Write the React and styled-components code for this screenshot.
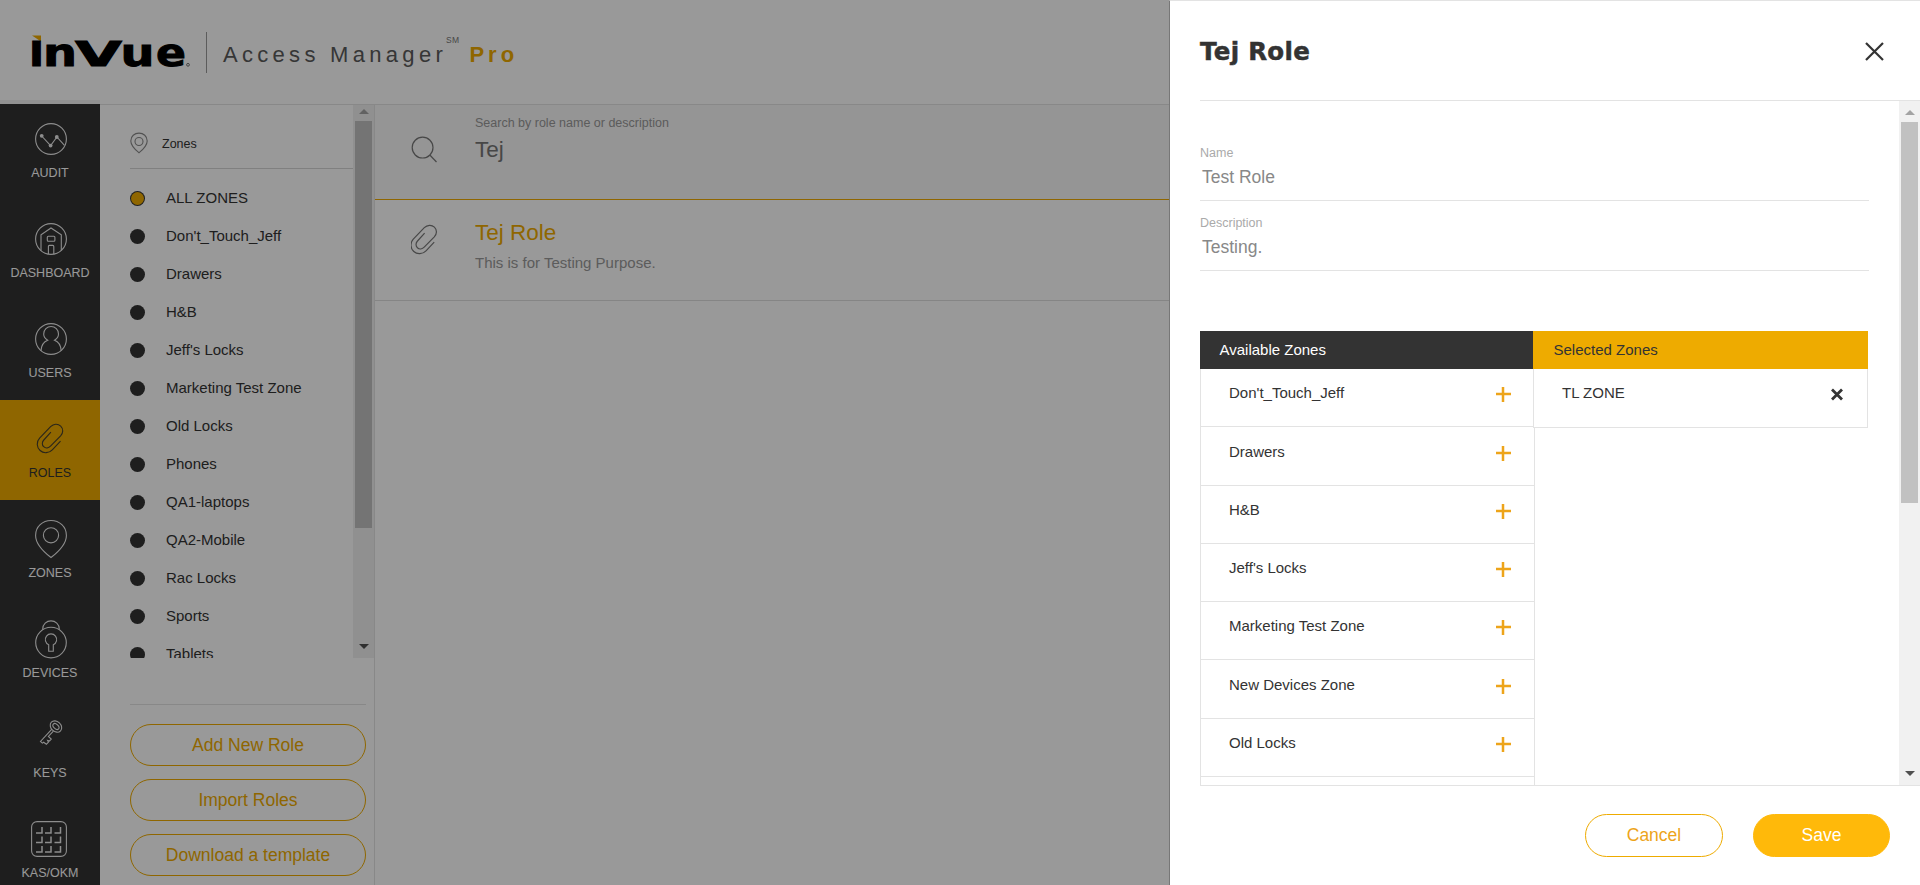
import React from "react";
import styled, { createGlobalStyle } from "styled-components";

const GlobalStyle = createGlobalStyle`
  * { box-sizing: border-box; }
  html, body { margin: 0; padding: 0; overflow: hidden; }
  body { font-family: "Liberation Sans", Arial, sans-serif; color: #333; background: #fff; }
  button, input { font-family: inherit; }
`;

const gold = "#eeab00";
const line = "#e3e3e3";

const Page = styled.div`
  position: relative;
  width: 1920px;
  height: 885px;
  overflow: hidden;
  display: flex;
  flex-direction: column;
  background: #fff;
`;

const Header = styled.header`
  height: 100px;
  flex: none;
  display: flex;
  align-items: flex-start;
  padding: 32px 0 0 28px;
`;

const Wordmark = styled.svg`
  display: block;
  flex: none;
  overflow: visible;
  font-family: "DejaVu Sans", sans-serif;
  font-weight: 700;
`;

const HeaderRule = styled.div`
  width: 1px;
  height: 41px;
  margin-left: 8px;
  background: #999;
`;

const Product = styled.div`
  display: flex;
  align-items: flex-start;
  margin: 0 0 0 16px;
  line-height: 24px;
  font-size: 22px;
  white-space: nowrap;
`;

const ProductName = styled.span`
  margin-top: 11px;
  letter-spacing: 4.3px;
  color: #5a5a5a;
`;

const ServiceMark = styled.sup`
  font-size: 8.5px;
  line-height: 10px;
  margin: 3px 0 0 -1px;
  letter-spacing: 0.3px;
  color: #777;
`;

const Edition = styled.b`
  margin: 11px 0 0 10px;
  letter-spacing: 4px;
  color: ${gold};
`;

const Body = styled.div`
  flex: 1;
  min-height: 0;
  display: flex;
`;

const Nav = styled.nav`
  width: 100px;
  flex: none;
  background: #333;
  border-top: 4px solid #f3f3f3;
  display: flex;
  flex-direction: column;
`;

const NavItem = styled.a`
  height: 100px;
  flex: none;
  display: flex;
  flex-direction: column;
  align-items: center;
  padding-top: 14px;
  background: ${(p) => (p.$active ? gold : "transparent")};
  color: ${(p) => (p.$active ? "#333" : "#fff")};
  font-size: 12.5px;
  line-height: 16px;

  &:first-child {
    height: 96px;
    padding-top: 10px;
  }
`;

const NavIcon = styled.svg`
  width: 50px;
  height: 50px;
  flex: none;
  margin: 0 0 1px 1px;
  fill: none;
  stroke: currentColor;
  stroke-width: 1.1;
  opacity: 0.9;
`;

const Side = styled.aside`
  width: 275px;
  flex: none;
  margin-top: 4px;
  border-top: 1px solid ${line};
  border-right: 1px solid ${line};
  display: flex;
  flex-direction: column;
`;

const ZoneScroller = styled.div`
  height: 553px;
  flex: none;
  display: flex;
  overflow: hidden;
`;

const ZonePane = styled.div`
  flex: 1;
  padding-left: 30px;
`;

const ZoneTitle = styled.div`
  height: 64px;
  display: flex;
  align-items: flex-start;
  border-bottom: 1px solid #d6d6d6;
  font-size: 12.5px;
  line-height: 16px;

  svg { margin: 27px 14px 0 0; }
  span { margin-top: 31px; }
`;

const ZoneList = styled.ul`
  list-style: none;
  margin: 11px 0 0;
  padding: 0;
`;

const Zone = styled.li`
  height: 38px;
  display: flex;
  align-items: flex-start;
  font-size: 15px;
  line-height: 18px;

  span { margin-top: 9px; }
`;

const Dot = styled.i`
  width: 15px;
  height: 15px;
  margin: 11px 21px 0 0;
  border-radius: 50%;
  background: #333;
  display: flex;
  align-items: flex-end;
  justify-content: center;
  padding-bottom: 1px;

  &::after {
    content: "";
    width: 13px;
    height: 13px;
    border-radius: 50%;
    background: ${(p) => (p.$on ? gold : "#333")};
  }
`;

const Track = styled.div`
  width: 21px;
  flex: none;
  display: flex;
  flex-direction: column;
  align-items: center;
  background: #f1f1f1;
`;

const Thumb = styled.div`
  width: 17px;
  height: ${(p) => p.$h}px;
  background: #c1c1c1;
`;

const Arrow = styled.i`
  width: 0;
  height: 0;
  border: 5px solid transparent;
  border-top-width: ${(p) => (p.$up ? 0 : 5)}px;
  border-bottom-width: ${(p) => (p.$up ? 5 : 0)}px;
  border-top-color: #505050;
  border-bottom-color: #a3a3a3;
  margin: ${(p) => p.$m};
`;

const Actions = styled.div`
  margin: 46px 8px 0 30px;
  padding-top: 19px;
  border-top: 1px solid ${line};
  display: flex;
  flex-direction: column;
  gap: 13px;
`;

const Pill = styled.button`
  width: ${(p) => p.$w || "100%"};
  height: ${(p) => p.$h || 42}px;
  padding: 0 0 1px;
  border: 1px solid ${(p) => (p.$solid ? "#ffb90a" : gold)};
  border-radius: 22px;
  background: ${(p) => (p.$solid ? "#ffb90a" : "transparent")};
  color: ${(p) => (p.$solid ? "#fff" : "#eda41a")};
  font-size: 17.5px;
  line-height: 20px;
`;

const SidePill = styled(Pill)`
  color: ${gold};
`;

const Main = styled.main`
  flex: 1;
  margin-top: 4px;
  border-top: 1px solid ${line};
`;

const Row = styled.div`
  display: flex;
  align-items: flex-start;
  padding-left: 36px;
`;

const SearchRow = styled(Row)`
  height: 95px;
  background: #f8f8f8;
  border-bottom: 1px solid ${gold};
`;

const RoleRow = styled(Row)`
  height: 101px;
  border-bottom: 1px solid #dedede;
`;

const RowIcon = styled.svg`
  flex: none;
  width: 28px;
  height: 58px;
  fill: none;
  stroke: #777;
  stroke-width: 1.2;
`;

const RowText = styled.div`
  margin-left: 36px;
  display: flex;
  flex-direction: column;
`;

const SearchLabel = styled.label`
  margin-top: 10px;
  font-size: 12.5px;
  line-height: 16px;
  color: #999;
`;

const SearchValue = styled.span`
  margin-top: 6px;
  font-size: 22.5px;
  line-height: 26px;
  color: #777;
`;

const RoleName = styled.span`
  margin-top: 20px;
  font-size: 22.5px;
  line-height: 26px;
  color: ${gold};
`;

const RoleNote = styled.span`
  margin-top: 8px;
  font-size: 15px;
  line-height: 18px;
  color: #999;
`;

const Overlay = styled.div`
  position: absolute;
  inset: 0;
  background: rgba(0, 0, 0, 0.4);
  display: flex;
  justify-content: flex-end;
`;

const Drawer = styled.section`
  width: 751px;
  height: 885px;
  border-left: 1px solid #777;
  border-top: 1px solid ${line};
  background: #fff;
  display: flex;
  flex-direction: column;
  padding-left: 30px;
`;

const DrawerHead = styled.header`
  height: 100px;
  flex: none;
  display: flex;
  justify-content: space-between;
  align-items: flex-start;
  border-bottom: 1px solid ${line};
  padding: 33px 36px 0 0;

  svg { margin-top: 8px; }
`;

const Title = styled.h1`
  margin: 1px 0 0;
  font-family: "DejaVu Sans", sans-serif;
  font-size: 24.5px;
  line-height: 34px;
  font-weight: 700;
  letter-spacing: 0.3px;
  -webkit-text-stroke: 0.5px #333;
`;

const DrawerBody = styled.div`
  height: 685px;
  flex: none;
  display: flex;
  border-bottom: 1px solid ${line};
`;

const Form = styled.div`
  flex: 1;
  overflow: hidden;
  padding: 30px 30px 0 0;
`;

const Field = styled.div`
  height: 70px;
  border-bottom: 1px solid ${line};
  display: flex;
  flex-direction: column;
`;

const FieldLabel = styled.label`
  margin-top: 14px;
  font-size: 12.5px;
  line-height: 16px;
  color: #aaa;
`;

const FieldValue = styled.span`
  margin: 6px 0 0 2px;
  font-size: 17.5px;
  line-height: 20px;
  color: #888;
`;

const Columns = styled.div`
  display: flex;
  align-items: flex-start;
  margin-top: 60px;
`;

const Column = styled.div`
  flex: none;
  width: ${(p) => p.$w}px;
`;

const ColumnHead = styled.div`
  height: 38px;
  padding: 10px 0 0 ${(p) => (p.$gold ? 20.5 : 19.5)}px;
  font-size: 15px;
  line-height: 18px;
  background: ${(p) => (p.$gold ? gold : "#333")};
  color: ${(p) => (p.$gold ? "#333" : "#fff")};
`;

const Cell = styled.div`
  width: 335px;
  height: ${(p) => p.$h}px;
  display: flex;
  justify-content: space-between;
  align-items: flex-start;
  border: 1px solid ${line};
  border-top: 0;
  padding: ${(p) => p.$t || 15}px ${(p) => p.$r}px 0 28px;
  font-size: 15px;
  line-height: 18px;
  color: #333;
  background: #fff;

  svg { flex: none; margin-top: 3px; }
`;

const SelectedColumn = styled(Column)`
  position: relative;
`;

const DrawerFoot = styled.footer`
  display: flex;
  justify-content: flex-end;
  gap: 30px;
  padding: 28px 30px 0 0;
`;

const Clip = () => (
  <path d="M35.200 27.200L27 35.800c-3.400 3.500-8.800 3.900-12.200.7-3.500-3.300-3.900-8.600-.5-12.300L25.300 12.700c3-3 7.300-3.200 10.100-.6 2.800 2.700 2.600 6.900-.1 9.800L25.200 32.200c-1.900 2-4.900 2.300-6.800.5-1.900-1.800-1.800-4.700.1-6.700l7.100-7.800" />
);

const navIcons = {
  AUDIT: (
    <>
      <circle cx="25" cy="25" r="15.4" />
      <path d="M15.700 22l8.900 9.600 6.300-8.600 7.600 8.400" />
      <g fill="currentColor" stroke="none">
        <circle cx="15.700" cy="21.800" r="1.900" />
        <circle cx="24.600" cy="31.600" r="1.900" />
        <circle cx="30.800" cy="23" r="1.900" />
      </g>
    </>
  ),
  DASHBOARD: (
    <>
      <circle cx="25" cy="25" r="15.4" />
      <path d="M15 36.400V20.700L25 14l10.300 6.700v15.700" />
      <rect x="21.300" y="22.300" width="7.600" height="5" rx="1" />
      <path d="M22.400 40v-7.600a1 1 0 0 1 1-1h3.400a1 1 0 0 1 1 1V40" />
    </>
  ),
  USERS: (
    <>
      <circle cx="25" cy="25" r="15.4" />
      <path d="M15 36.600c.4-5.600 2.800-9 6.700-10.400-2.500-1.600-4-3.600-4-6.300a7.400 7.400 0 0 1 14.800 0c0 2.700-1.400 4.700-4 6.300 4 1.400 6.300 4.800 6.700 10.400" />
    </>
  ),
  ROLES: (
    <g transform="translate(-0.700 0)">
      <Clip />
    </g>
  ),
  ZONES: (
    <>
      <circle cx="25" cy="21.300" r="7.600" />
      <path d="M25 43.500C20.500 40 9.600 30.500 9.600 21.400c0-8.900 7-14.900 15.400-14.900s15.400 6 15.400 14.900C40.400 30.500 29.500 40 25 43.500z" />
    </>
  ),
  DEVICES: (
    <>
      <circle cx="25" cy="28.600" r="15.300" />
      <path d="M16.700 15.200c0-5 3.900-8.300 8.300-8.300s8.300 3.300 8.300 8.300" />
      <path d="M22.700 37.300v-6.500a5.700 5.700 0 1 1 4.600 0v6.500z" />
    </>
  ),
  KEYS: (
    <g transform="translate(-2 -5) rotate(43 25 25)">
      <ellipse cx="25" cy="14.800" rx="6.300" ry="5" />
      <ellipse cx="25" cy="14.800" rx="3.600" ry="2.200" />
      <path d="M23.800 19.800v16.400h2.600l.3-1.500 3.400-.4v-3l-1.800-.7 1.800-.8v-2.600h-3.900v-7.400" />
    </g>
  ),
  "KAS/OKM": (
    <>
      <rect x="5.600" y="7.600" width="34.800" height="34.800" rx="5.500" />
      <path
        strokeWidth="1.500"
        d="M10 19h6v-6M19 19h6v-6M28.500 19h6v-6M10 28.500h6v-6M19 28.500h6v-6M28.500 28.500h6v-6M10 38h6v-6M19 38h6v-6M28.500 38h6v-6"
      />
    </>
  ),
};

const navItems = ["AUDIT", "DASHBOARD", "USERS", "ROLES", "ZONES", "DEVICES", "KEYS", "KAS/OKM"];

const zones = [
  "ALL ZONES", "Don't_Touch_Jeff", "Drawers", "H&B", "Jeff's Locks", "Marketing Test Zone", "Old Locks",
  "Phones", "QA1-laptops", "QA2-Mobile", "Rac Locks", "Sports", "Tablets",
];

const available = [
  ["Don't_Touch_Jeff", 58], ["Drawers", 59], ["H&B", 58], ["Jeff's Locks", 58],
  ["Marketing Test Zone", 58], ["New Devices Zone", 59], ["Old Locks", 58],
];

const Plus = () => (
  <svg width="15" height="15" fill="none" stroke="#eda41a" strokeWidth="2.500">
    <path d="M0 7h15M7 0v15" />
  </svg>
);

export default function App() {
  return (
    <Page>
      <GlobalStyle />
      <Header>
        <Wordmark width="170" height="42" viewBox="28 32 170 42">
          <path d="M32 35.500H41V41.500z" fill={gold} />
          <text y="66.400" fontSize="33" stroke="#000" strokeWidth="0.900">
            <tspan x="29" textLength="15" lengthAdjust="spacingAndGlyphs">I</tspan>
            <tspan x="43" fontSize="37" textLength="34" lengthAdjust="spacingAndGlyphs">n</tspan>
            <tspan x="75" textLength="47" lengthAdjust="spacingAndGlyphs">V</tspan>
            <tspan x="120.500" fontSize="37" textLength="34" lengthAdjust="spacingAndGlyphs">u</tspan>
            <tspan x="156" fontSize="37" textLength="30" lengthAdjust="spacingAndGlyphs">e</tspan>
          </text>
          <circle cx="188" cy="64.800" r="1.400" fill="none" stroke="#555" strokeWidth="0.800" />
        </Wordmark>
        <HeaderRule />
        <Product>
          <ProductName>Access Manager</ProductName>
          <ServiceMark>SM</ServiceMark>
          <Edition>Pro</Edition>
        </Product>
      </Header>
      <Body>
        <Nav>
          {navItems.map((name) => (
            <NavItem key={name} $active={name === "ROLES"}>
              <NavIcon viewBox="0 0 50 50">{navIcons[name]}</NavIcon>
              {name}
            </NavItem>
          ))}
        </Nav>
        <Side>
          <ZoneScroller>
            <ZonePane>
              <ZoneTitle>
                <svg width="18" height="22" fill="none" stroke="#888" strokeWidth="1.100">
                  <circle cx="9" cy="9.500" r="4" />
                  <path d="M9 20.800C6.500 18.700.8 14 .8 8.900c0-4.700 3.700-7.800 8.200-7.800s8.200 3.100 8.200 7.800c0 5.100-5.700 9.800-8.200 11.900z" />
                </svg>
                <span>Zones</span>
              </ZoneTitle>
              <ZoneList>
                {zones.map((z, i) => (
                  <Zone key={z}>
                    <Dot $on={i === 0} />
                    <span>{z}</span>
                  </Zone>
                ))}
              </ZoneList>
            </ZonePane>
            <Track>
              <Arrow $up $m="4px 0 7px" />
              <Thumb $h={407} />
              <Arrow $m="116px 0 0" />
            </Track>
          </ZoneScroller>
          <Actions>
            <SidePill>Add New Role</SidePill>
            <SidePill>Import Roles</SidePill>
            <SidePill>Download a template</SidePill>
          </Actions>
        </Side>
        <Main>
          <SearchRow>
            <RowIcon viewBox="0 0 28 58">
              <circle cx="11.600" cy="42.600" r="10.400" />
              <path d="M18.800 50l6.700 7" />
            </RowIcon>
            <RowText>
              <SearchLabel>Search by role name or description</SearchLabel>
              <SearchValue>Tej</SearchValue>
            </RowText>
          </SearchRow>
          <RoleRow>
            <RowIcon viewBox="12 -15 28 58">
              <Clip />
            </RowIcon>
            <RowText>
              <RoleName>Tej Role</RoleName>
              <RoleNote>This is for Testing Purpose.</RoleNote>
            </RowText>
          </RoleRow>
        </Main>
      </Body>
      <Overlay>
        <Drawer>
          <DrawerHead>
            <Title>Tej Role</Title>
            <svg width="19" height="19" fill="none" stroke="#333" strokeWidth="2.200">
              <path d="M1 1l17 17M18 1L1 18" />
            </svg>
          </DrawerHead>
          <DrawerBody>
            <Form>
              <Field>
                <FieldLabel>Name</FieldLabel>
                <FieldValue>Test Role</FieldValue>
              </Field>
              <Field>
                <FieldLabel>Description</FieldLabel>
                <FieldValue>Testing.</FieldValue>
              </Field>
              <Columns>
                <Column $w={333}>
                  <ColumnHead>Available Zones</ColumnHead>
                  {available.map(([name, h]) => (
                    <Cell key={name} $h={h} $t={h - 43} $r={23}>
                      {name}
                      <Plus />
                    </Cell>
                  ))}
                  <Cell $h={58} $r={23} />
                </Column>
                <SelectedColumn $w={335}>
                  <ColumnHead $gold>Selected Zones</ColumnHead>
                  <Cell $h={59} $r={24}>
                    TL ZONE
                    <svg width="12" height="15" fill="none" stroke="#333" strokeWidth="2.800">
                      <path d="M1 2.500l10 10M11 2.500l-10 10" />
                    </svg>
                  </Cell>
                </SelectedColumn>
              </Columns>
            </Form>
            <Track>
              <Arrow $up $m="9px 0 7px" />
              <Thumb $h={381} />
              <Arrow $m="268px 0 0" />
            </Track>
          </DrawerBody>
          <DrawerFoot>
            <Pill $w="138px" $h={43}>Cancel</Pill>
            <Pill $w="137px" $h={43} $solid>Save</Pill>
          </DrawerFoot>
        </Drawer>
      </Overlay>
    </Page>
  );
}
